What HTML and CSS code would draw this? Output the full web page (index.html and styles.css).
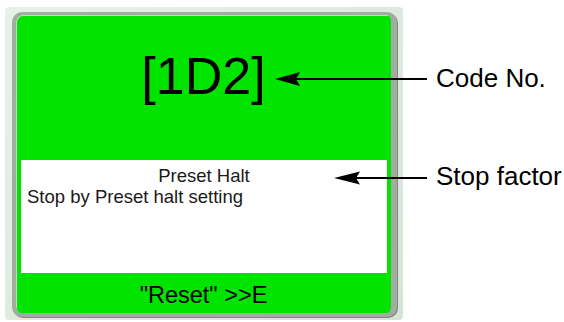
FILE: index.html
```html
<!DOCTYPE html>
<html lang="en">
<head>
    <meta charset="UTF-8">
    <title>Stop Code Screen</title>
    <link rel="stylesheet" href="styles.css">
</head>
<body>
    <div class="page">
        <div class="panel">
            <div class="screen">
                <div class="code">[1D2]</div>
                <div class="message">
                    <div class="message-title">Preset Halt</div>
                    <div class="message-text">Stop by Preset halt setting</div>
                </div>
                <div class="footer">"Reset" &gt;&gt;E</div>
            </div>
        </div>
        <div class="labels">
            <div class="label label-code">Code No.</div>
            <div class="label label-stop">Stop factor</div>
        </div>
        <svg class="arrows" width="564" height="322" viewBox="0 0 564 322">
            <line x1="296" y1="79" x2="427" y2="79" stroke="#000" stroke-width="2"/>
            <polygon points="275,79 300,72 296,79 300,86" fill="#000"/>
            <line x1="356" y1="178" x2="427" y2="178" stroke="#000" stroke-width="2"/>
            <polygon points="334,178 360,171.5 356,178 360,184.5" fill="#000"/>
        </svg>
    </div>
</body>
</html>
```

FILE: styles.css
```css
body {
    margin: 0;
    padding: 0;
    background-color: #fff;
    font-family: "Liberation Sans", Arial, sans-serif;
    color: #000;
}
.page {
    position: relative;
    display: flex;
    width: 564px;
    height: 322px;
}
.panel {
    margin: 7px 0 0 5px;
    width: 398px;
    height: 313px;
    box-sizing: border-box;
    padding: 5px 6px 3px 7px;
    background: linear-gradient(135deg, #e8f1e8, #d6e4d6);
    border-radius: 4px;
}
.screen {
    display: flex;
    flex-direction: column;
    height: 305px;
    box-sizing: border-box;
    background-color: #00e400;
    border-style: solid;
    border-color: #a2aca2;
    border-width: 3px 6px 4px 4px;
    border-radius: 10px;
    box-shadow: inset 1px 1px 0 #c9d6c9, 1px 1px 0 #7f8a7f;
}
.code {
    height: 145px;
    box-sizing: border-box;
    padding-top: 35px;
    text-align: center;
    font-size: 52px;
    line-height: 1;
}
.message {
    height: 113px;
    box-sizing: border-box;
    margin: 0 4px 0 5px;
    padding: 5px 6px 0;
    background-color: #fff;
    color: #1a1a1a;
    font-size: 18.5px;
    line-height: 21px;
}
.message-title {
    text-align: center;
}
.footer {
    flex: 1;
    padding-top: 11px;
    text-align: center;
    font-size: 23.5px;
    line-height: 1;
}
.labels {
    display: flex;
    flex-direction: column;
    margin-left: 33px;
    padding-top: 65px;
    font-size: 26px;
    line-height: 1;
}
.label-stop {
    margin-top: 72px;
}
.arrows {
    position: absolute;
    top: 0;
    left: 0;
    pointer-events: none;
}
```
